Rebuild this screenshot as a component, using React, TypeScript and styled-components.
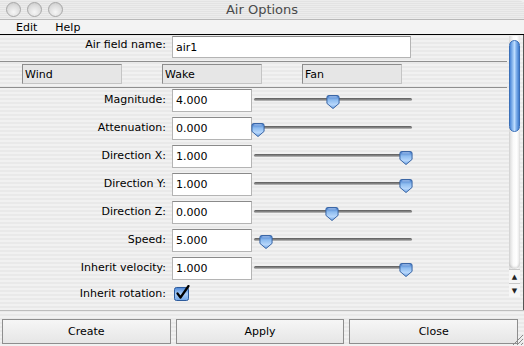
import React from 'react';
import styled, { createGlobalStyle } from 'styled-components';

const Global = createGlobalStyle`
  html, body { margin: 0; padding: 0; background: #fff; }
  body { font-family: "Lucida Grande", "DejaVu Sans", sans-serif; }
`;

const pinstripe = `repeating-linear-gradient(to bottom, #f1f1f1 0px, #f1f1f1 2px, #e9e9e9 2px, #e9e9e9 4px)`;

const Window = styled.div`
  width: 524px;
  height: 346px;
  display: flex;
  flex-direction: column;
  background: ${pinstripe};
  overflow: hidden;
  position: relative;
`;

const TitleBar = styled.div`
  height: 20px;
  display: flex;
  align-items: center;
  position: relative;
  background: repeating-linear-gradient(to bottom, #ececec 0px, #ececec 1px, #e3e3e3 1px, #e3e3e3 2px);
  border-bottom: 1px solid #b8b8b8;
  border-top-right-radius: 6px;
  box-sizing: border-box;
`;

const Lights = styled.div`
  display: flex;
  gap: 6px;
  padding-left: 6px;
`;

const Light = styled.span`
  width: 15px;
  height: 15px;
  border-radius: 50%;
  box-sizing: border-box;
  border: 1px solid #a6a6a6;
  background: radial-gradient(circle at 50% 70%, #f6f6f6 0%, #dcdcdc 60%, #c4c4c4 100%);
`;

const Title = styled.div`
  position: absolute;
  left: 0;
  right: 0;
  text-align: center;
  font-size: 13px;
  color: #4a4a4a;
  pointer-events: none;
`;

const MenuBar = styled.div`
  height: 15px;
  display: flex;
  align-items: center;
  gap: 18px;
  padding-left: 16px;
  font-size: 11px;
  color: #000;
  background: #f3f3f3;
  border-bottom: 1px solid #000;
  box-sizing: border-box;
`;

const Body = styled.div`
  height: 275px;
  display: flex;
  border-bottom: 1px solid #bdbdbd;
`;

const Main = styled.div`
  flex: 1;
  display: flex;
  flex-direction: column;
`;

const Row = styled.div<{ $top?: number }>`
  display: flex;
  align-items: center;
  height: 23px;
  margin-top: ${p => p.$top ?? 5}px;
`;

const Label = styled.div<{ $pad?: number }>`
  width: 166px;
  text-align: right;
  font-size: 11px;
  color: #000;
  padding-right: 6px;
  line-height: 14px;
  align-self: flex-start;
  padding-top: ${p => p.$pad ?? 4}px;
`;

const Field = styled.div<{ $w: number }>`
  width: ${p => p.$w}px;
  height: 100%;
  box-sizing: border-box;
  background: #fff;
  border: 1px solid #b4b4b4;
  border-top-color: #8a8a8a;
  font-size: 11px;
  padding: 4px 0 0 3px;
  color: #000;
`;

const Divider = styled.div<{ $top?: number }>`
  height: 1px;
  background: #8f8f8f;
  margin-top: ${p => p.$top ?? 0}px;
`;

const TabRow = styled.div`
  display: flex;
  gap: 40px;
  padding-left: 22px;
  margin-top: 2px;
  height: 20px;
  margin-bottom: 3px;
`;

const Tab = styled.div`
  width: 100px;
  height: 20px;
  box-sizing: border-box;
  border: 1px solid #8c8c8c;
  border-bottom-color: #c4c4c4;
  border-right-color: #c4c4c4;
  background: #e6e6e6;
  font-size: 11px;
  padding: 3px 0 0 2px;
  color: #000;
`;

const SliderBox = styled.div`
  position: relative;
  width: 160px;
  height: 100%;
`;

const Track = styled.div`
  position: absolute;
  left: 2px;
  right: 0;
  top: 9px;
  height: 3px;
  border-radius: 2px;
  background: linear-gradient(to bottom, #5a5a5a, #8a8a8a 60%, #c8c8c8);
`;

const Thumb = styled.svg`
  position: absolute;
  top: 6px;
  width: 14px;
  height: 14px;
  margin-left: -7px;
`;

const CheckBox = styled.svg`
  width: 16px;
  height: 16px;
  margin-left: 2px;
`;

const ScrollCol = styled.div`
  width: 17px;
  border-right: 1px solid #555;
  display: flex;
  padding-left: 2px;
  box-sizing: border-box;
`;

const ScrollTrack = styled.div`
  width: 11px;
  margin-top: 1px;
  height: 261px;
  display: flex;
  flex-direction: column;
  background: linear-gradient(to right, #d8d8d8, #fafafa 40%, #ffffff 70%, #e4e4e4);
`;

const ScrollThumb = styled.div`
  margin-top: 4px;
  height: 92px;
  border-radius: 6px;
  border: 1px solid #3a6fb8;
  box-sizing: border-box;
  background: linear-gradient(to right, #4a86d8, #9cc6f4 35%, #bcdcff 50%, #7fb0ec 70%, #3f7ccf);
`;

const TrackFill = styled.div`
  flex: 1;
  border-bottom-left-radius: 6px;
  border-bottom-right-radius: 6px;
  box-shadow: inset 0 -2px 2px rgba(0,0,0,0.12);
`;

const Arrow = styled.div`
  height: 13px;
  display: flex;
  align-items: center;
  justify-content: center;
  font-size: 7px;
  color: #222;
  border-top: 1px solid #c8c8c8;
  background: #f6f6f6;
`;

const ButtonBar = styled.div`
  flex: 1;
  display: flex;
  gap: 5px;
  padding: 8px 6px 0 2px;
`;

const Button = styled.div`
  flex: 1;
  height: 25px;
  box-sizing: border-box;
  border: 1px solid #8e8e8e;
  background: linear-gradient(to bottom, #f6f6f6, #e6e6e6);
  font-size: 11px;
  display: flex;
  align-items: center;
  justify-content: center;
  color: #000;
`;

const Grip = styled.svg`
  position: absolute;
  right: 0;
  bottom: 0;
  width: 14px;
  height: 14px;
`;

const rows = [
  { label: 'Magnitude:', value: '4.000', pos: 0.51 },
  { label: 'Attenuation:', value: '0.000', pos: 0 },
  { label: 'Direction X:', value: '1.000', pos: 1 },
  { label: 'Direction Y:', value: '1.000', pos: 1 },
  { label: 'Direction Z:', value: '0.000', pos: 0.5 },
  { label: 'Speed:', value: '5.000', pos: 0.055 },
  { label: 'Inherit velocity:', value: '1.000', pos: 1 },
];

const ThumbIcon = ({ left }: { left: number }) => (
  <Thumb style={{ left }} viewBox="0 0 14 15">
    <defs>
      <linearGradient id="tg" x1="0" y1="0" x2="0" y2="1">
        <stop offset="0" stopColor="#3d73c4" />
        <stop offset="0.35" stopColor="#8fbdf0" />
        <stop offset="0.7" stopColor="#b6d6fb" />
        <stop offset="1" stopColor="#6ea4e6" />
      </linearGradient>
    </defs>
    <path d="M2.5 0.5 H11.5 Q13.5 0.5 13.5 2.5 V9 L7 14.5 L0.5 9 V2.5 Q0.5 0.5 2.5 0.5 Z" fill="url(#tg)" stroke="#2f5d9e" strokeWidth="1" />
    <path d="M3 2 H11" stroke="#dceaff" strokeWidth="1" opacity="0.7" />
  </Thumb>
);

const Slider = ({ pos }: { pos: number }) => (
  <SliderBox>
    <Track />
    <ThumbIcon left={6 + pos * 148} />
  </SliderBox>
);

export default function App() {
  return (
    <Window>
      <Global />
      <TitleBar>
        <Lights>
          <Light />
          <Light />
          <Light />
        </Lights>
        <Title>Air Options</Title>
      </TitleBar>
      <MenuBar>
        <span>Edit</span>
        <span>Help</span>
      </MenuBar>
      <Body>
        <Main>
          <Row $top={1} style={{ height: 22 }}>
            <Label $pad={2}>Air field name:</Label>
            <Field $w={239}>air1</Field>
          </Row>
          <Divider $top={3} />
          <TabRow>
            <Tab>Wind</Tab>
            <Tab>Wake</Tab>
            <Tab>Fan</Tab>
          </TabRow>
          <Divider />
          {rows.map((r, i) => (
            <Row key={r.label} $top={i === 0 ? 1 : 5}>
              <Label>{r.label}</Label>
              <Field $w={80}>{r.value}</Field>
              <Slider pos={r.pos} />
            </Row>
          ))}
          <Row $top={5} style={{ height: 17, alignItems: 'flex-start' }}>
            <Label $pad={2}>Inherit rotation:</Label>
            <CheckBox viewBox="0 0 16 16">
              <defs>
                <linearGradient id="cb" x1="0" y1="0" x2="0" y2="1">
                  <stop offset="0" stopColor="#4a85d6" />
                  <stop offset="0.5" stopColor="#a9cdf7" />
                  <stop offset="1" stopColor="#6fa5e8" />
                </linearGradient>
              </defs>
              <rect x="0.5" y="2.5" width="14" height="13" rx="2" fill="url(#cb)" stroke="#2d5b9c" />
              <path d="M3.5 8.5 L6.5 12.5 L14.5 1" fill="none" stroke="#000" strokeWidth="2.2" strokeLinecap="round" strokeLinejoin="round" />
            </CheckBox>
          </Row>
        </Main>
        <ScrollCol>
          <ScrollTrack>
            <ScrollThumb />
            <TrackFill />
            <Arrow>▲</Arrow>
            <Arrow>▼</Arrow>
          </ScrollTrack>
        </ScrollCol>
      </Body>
      <ButtonBar>
        <Button>Create</Button>
        <Button>Apply</Button>
        <Button>Close</Button>
      </ButtonBar>
      <Grip viewBox="0 0 14 14">
        <path d="M13 3 L3 13 M13 7 L7 13 M13 11 L11 13" stroke="#8a8a8a" strokeWidth="1" />
      </Grip>
    </Window>
  );
}
